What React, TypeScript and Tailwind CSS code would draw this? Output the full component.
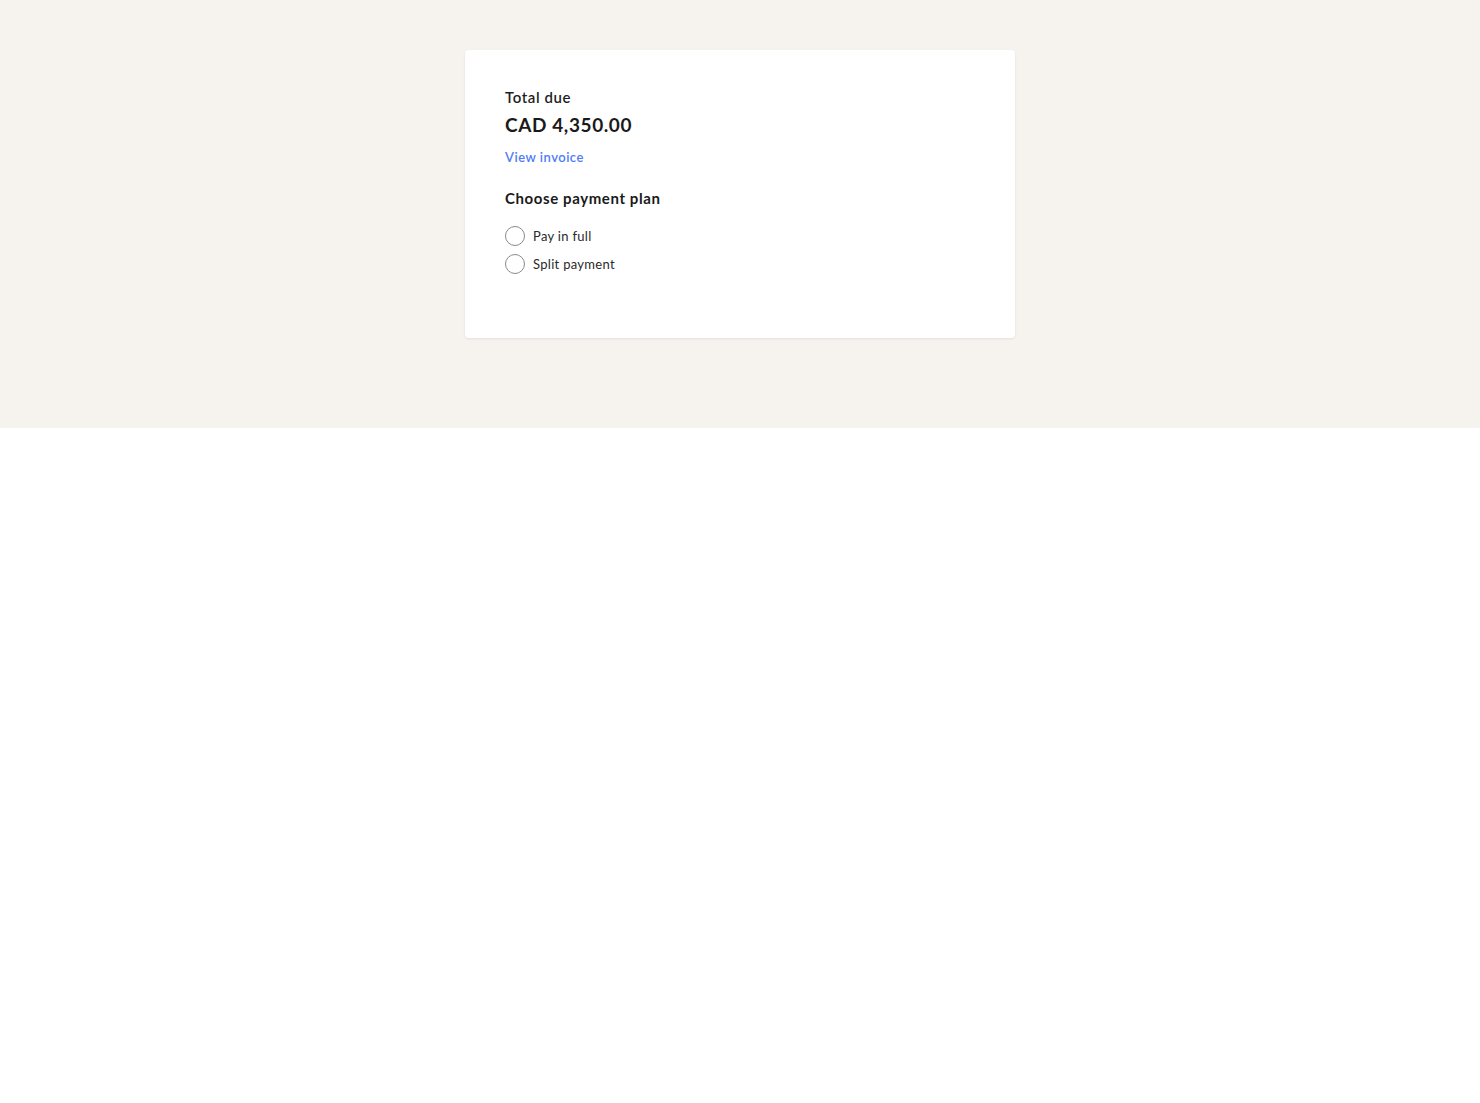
import React, { useState } from 'react';

const App: React.FC = () => {
  const [plan, setPlan] = useState<string | null>(null);

  return (
    <div className="bg-white min-h-screen" style={{ fontFamily: 'Lato, "Noto Sans", sans-serif' }}>
      <div className="bg-[#f6f3ef] h-[428px] pt-[50px]">
        <div className="mx-auto w-[550px] h-[288px] bg-white rounded-[4px] shadow-[0_1px_3px_rgba(0,0,0,0.08)] px-10 pt-[37px]">
          <div className="text-[15px] font-semibold text-[#1f1f1f] leading-[20px] tracking-[0.6px]">Total due</div>
          <div className="text-[19px] font-bold text-[#1a1a1a] leading-[24px] mt-[6px] tracking-[0.6px]">CAD 4,350.00</div>
          <button className="block text-[13px] font-semibold text-[#4f7cf6] leading-[16px] mt-[12px] tracking-[0.5px]">View invoice</button>

          <div className="text-[15px] font-bold text-[#1a1a1a] leading-[20px] mt-[23px] tracking-[0.6px]">Choose payment plan</div>
          <div className="flex flex-col gap-2 mt-[18px]">
            {['Pay in full', 'Split payment'].map((label) => (
              <label key={label} className="flex items-center gap-2 cursor-pointer">
                <span
                  onClick={() => setPlan(label)}
                  className="w-5 h-5 rounded-full border border-[#8a8a8a] bg-white flex items-center justify-center"
                >
                  {plan === label && <span className="w-2.5 h-2.5 rounded-full bg-[#4f7cf6]" />}
                </span>
                <span className="text-[13px] text-[#2a2a2a] leading-5 tracking-[0.3px]">{label}</span>
              </label>
            ))}
          </div>
        </div>
      </div>
    </div>
  );
};

export default App;
